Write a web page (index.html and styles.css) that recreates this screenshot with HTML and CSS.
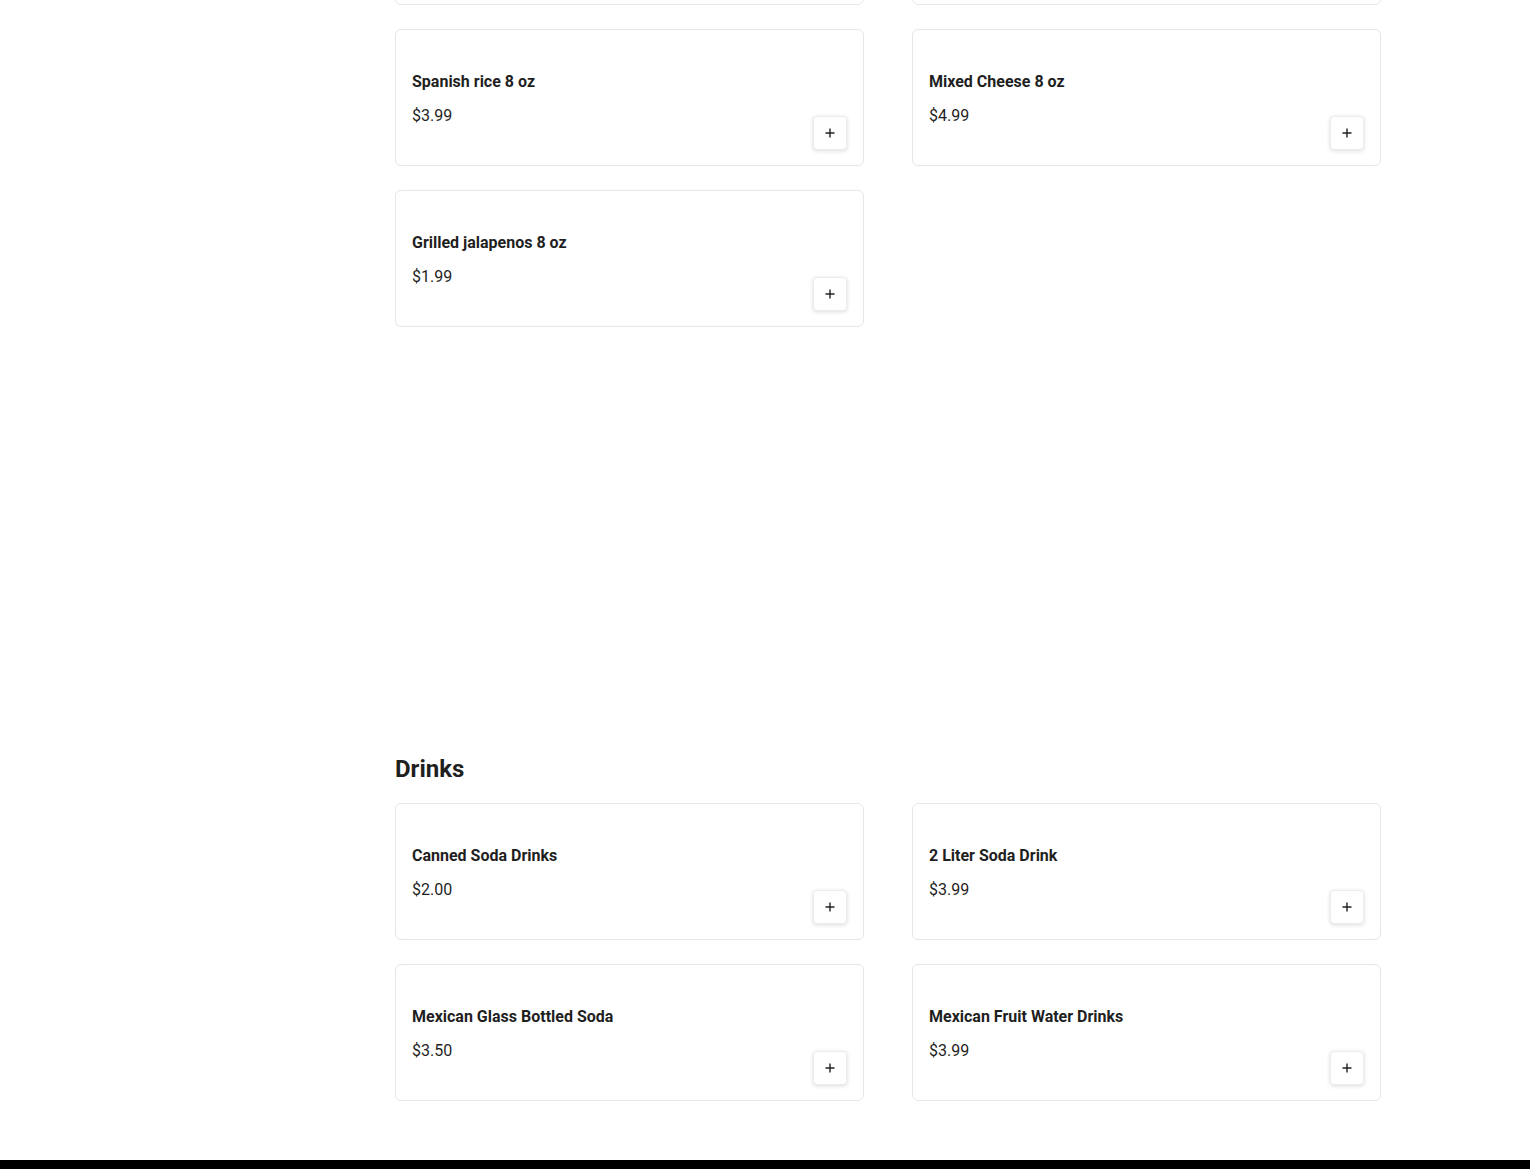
FILE: index.html
```html
<!DOCTYPE html>
<html lang="en">
<head>
  <meta charset="UTF-8" />
  <meta name="viewport" content="width=device-width, initial-scale=1.0"/>
  <title>Menu</title>
  <link rel="stylesheet" href="styles.css">
</head>
<body>
  <div class="page">
    <aside class="sidebar"></aside>
    <main class="menu">
      <section class="category sides">
        <div class="grid">
          <!-- previous row, scrolled out of view -->
          <div class="item"></div>
          <div class="item"></div>
          <div class="item">
            <div class="info">
              <div class="name">Spanish rice 8 oz</div>
              <div class="price">$3.99</div>
            </div>
            <button class="add" aria-label="Add"><svg width="10" height="10" viewBox="0 0 10 10"><path d="M5 0.5v9M0.5 5h9" stroke="#222" stroke-width="1.4"/></svg></button>
          </div>
          <div class="item">
            <div class="info">
              <div class="name">Mixed Cheese 8 oz</div>
              <div class="price">$4.99</div>
            </div>
            <button class="add" aria-label="Add"><svg width="10" height="10" viewBox="0 0 10 10"><path d="M5 0.5v9M0.5 5h9" stroke="#222" stroke-width="1.4"/></svg></button>
          </div>
          <div class="item">
            <div class="info">
              <div class="name">Grilled jalapenos 8 oz</div>
              <div class="price">$1.99</div>
            </div>
            <button class="add" aria-label="Add"><svg width="10" height="10" viewBox="0 0 10 10"><path d="M5 0.5v9M0.5 5h9" stroke="#222" stroke-width="1.4"/></svg></button>
          </div>
        </div>
      </section>

      <section class="category">
        <h2>Drinks</h2>
        <div class="grid">
          <div class="item">
            <div class="info">
              <div class="name">Canned Soda Drinks</div>
              <div class="price">$2.00</div>
            </div>
            <button class="add" aria-label="Add"><svg width="10" height="10" viewBox="0 0 10 10"><path d="M5 0.5v9M0.5 5h9" stroke="#222" stroke-width="1.4"/></svg></button>
          </div>
          <div class="item">
            <div class="info">
              <div class="name">2 Liter Soda Drink</div>
              <div class="price">$3.99</div>
            </div>
            <button class="add" aria-label="Add"><svg width="10" height="10" viewBox="0 0 10 10"><path d="M5 0.5v9M0.5 5h9" stroke="#222" stroke-width="1.4"/></svg></button>
          </div>
          <div class="item">
            <div class="info">
              <div class="name">Mexican Glass Bottled Soda</div>
              <div class="price">$3.50</div>
            </div>
            <button class="add" aria-label="Add"><svg width="10" height="10" viewBox="0 0 10 10"><path d="M5 0.5v9M0.5 5h9" stroke="#222" stroke-width="1.4"/></svg></button>
          </div>
          <div class="item">
            <div class="info">
              <div class="name">Mexican Fruit Water Drinks</div>
              <div class="price">$3.99</div>
            </div>
            <button class="add" aria-label="Add"><svg width="10" height="10" viewBox="0 0 10 10"><path d="M5 0.5v9M0.5 5h9" stroke="#222" stroke-width="1.4"/></svg></button>
          </div>
        </div>
      </section>
    </main>
  </div>
  <footer class="footer"></footer>
</body>
</html>
```

FILE: styles.css
```css
body {
  margin: 0;
  font-family: Roboto, "Liberation Sans", Arial, sans-serif;
  color: #1f1f1f;
  background-color: #fff;
}
.page {
  max-width: 1280px;
  margin: 0 auto;
  display: flex;
  gap: 24px;
}
.sidebar {
  width: 246px;
  flex-shrink: 0;
}
.menu {
  flex: 1;
  padding-right: 24px;
}
.sides {
  margin-top: -132px;
  margin-bottom: 428px;
}
h2 {
  font-size: 24px;
  font-weight: 700;
  line-height: 29px;
  margin: 0 0 19px;
}
.grid {
  display: grid;
  grid-template-columns: 1fr 1fr;
  column-gap: 48px;
  row-gap: 24px;
}
.item {
  box-sizing: border-box;
  min-height: 137px;
  padding: 16px 16px 15px;
  border: 1px solid #e6e6e6;
  border-radius: 6px;
  display: flex;
  justify-content: space-between;
  align-items: flex-end;
}
.info {
  align-self: flex-start;
  padding-top: 26px;
}
.name {
  font-size: 16px;
  font-weight: 700;
  line-height: 20px;
  margin-bottom: 12px;
}
.price {
  font-size: 16px;
  line-height: 24px;
}
.add {
  width: 34px;
  height: 34px;
  padding: 0;
  display: flex;
  align-items: center;
  justify-content: center;
  background-color: #fff;
  border: 1px solid #ececec;
  border-radius: 4px;
  box-shadow: 0 1px 4px rgba(0, 0, 0, 0.14);
  cursor: pointer;
}
.footer {
  margin-top: 59px;
  height: 200px;
  background-color: #000;
}
```
